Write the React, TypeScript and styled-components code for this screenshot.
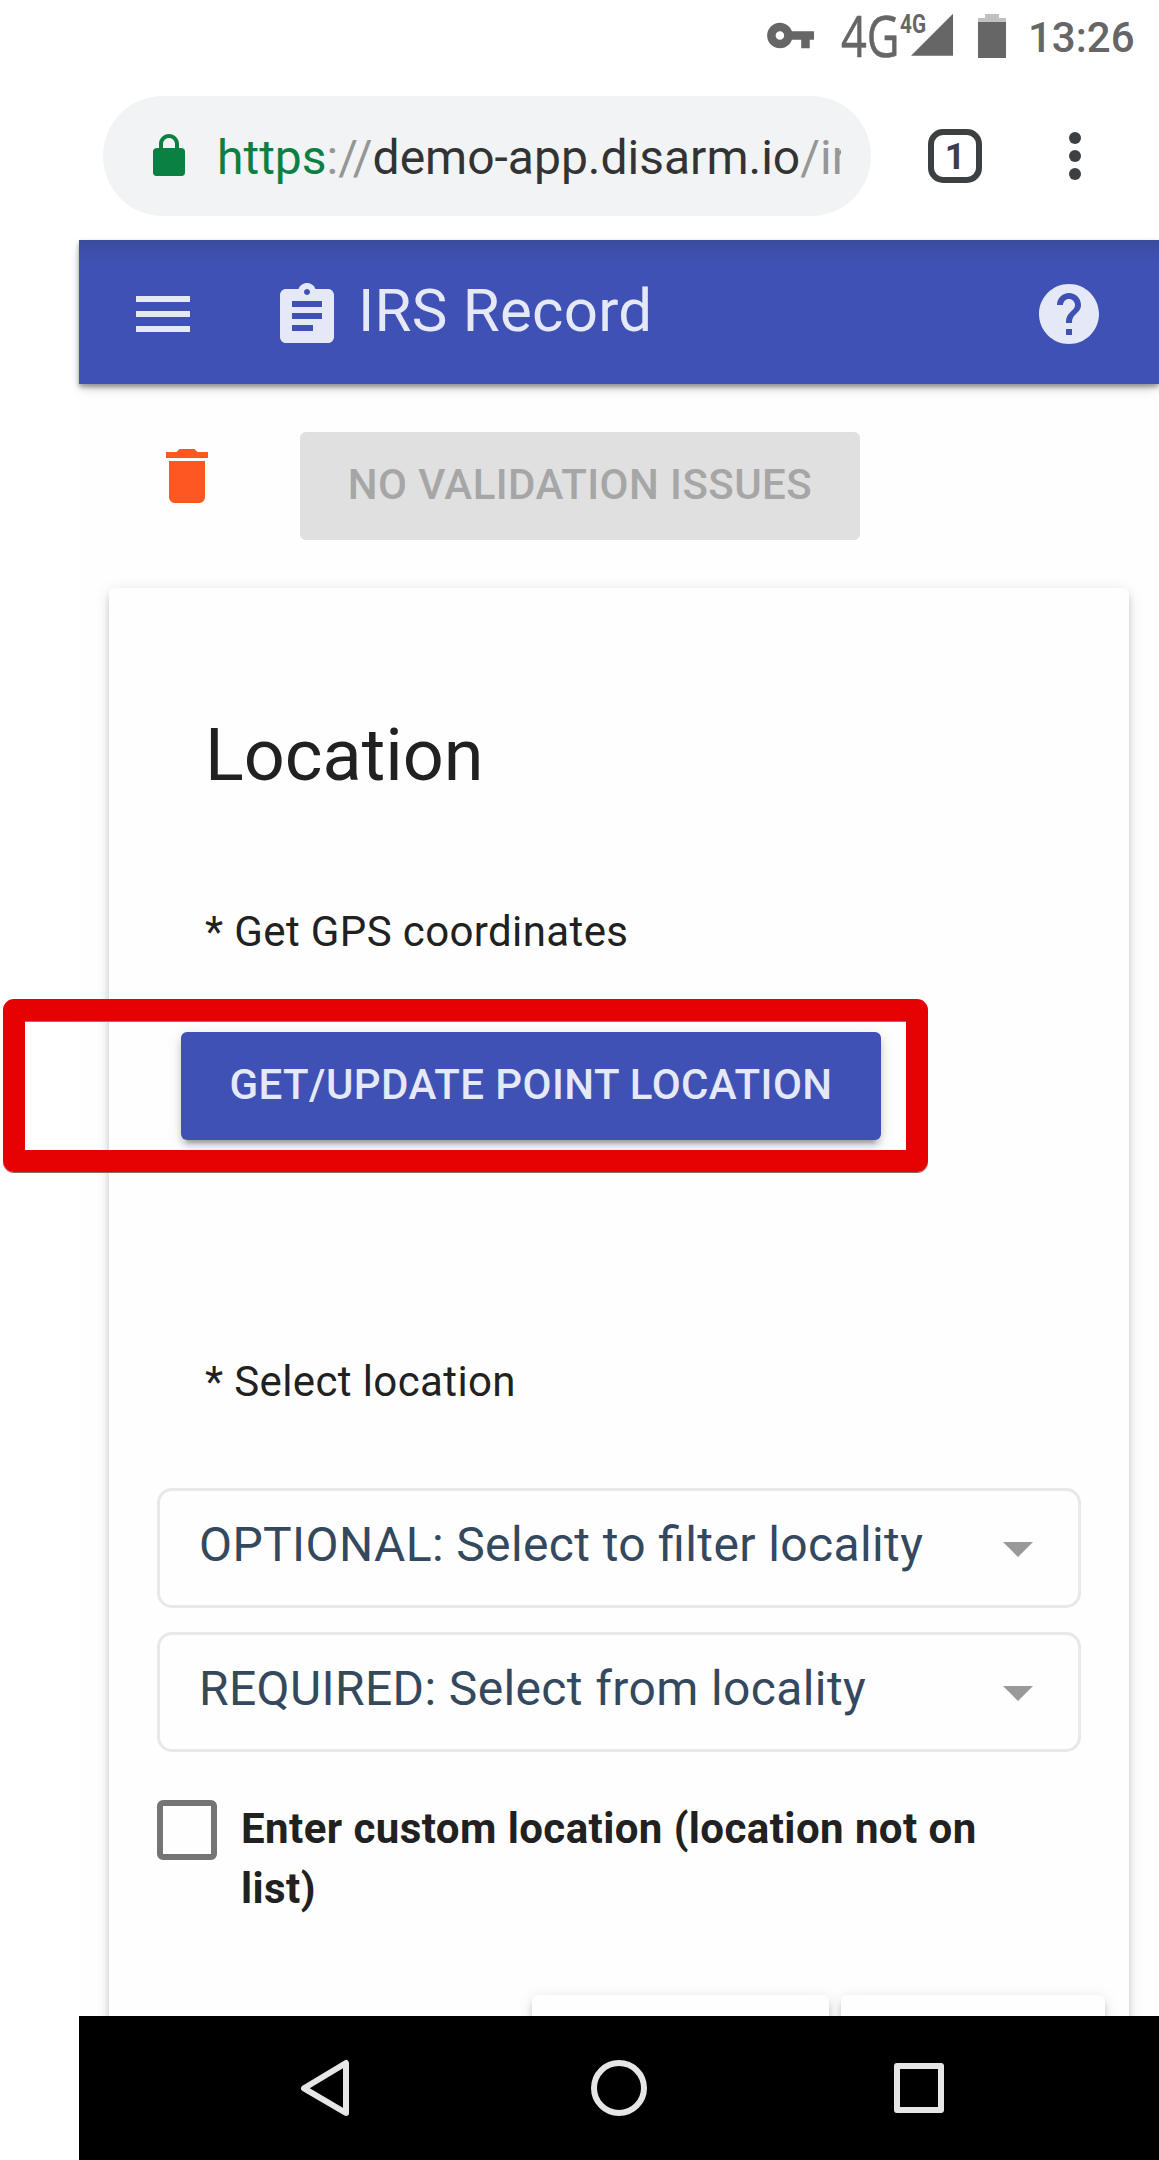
import React from "react";
import styled, { createGlobalStyle } from "styled-components";

const indigo = "#3f51b5";
const onPrimary = "#e5e8f6";

const GlobalStyle = createGlobalStyle`
  body {
    margin: 0;
    background: #fff;
    font-family: Roboto, "Liberation Sans", sans-serif;
    overflow: hidden;
  }
  *, *::before, *::after { box-sizing: border-box; }
  svg { display: block; flex: none; }
`;

const Stage = styled.div`
  position: relative;
  width: 1159px;
  height: 2160px;
  padding-left: 79px;
  overflow: hidden;
`;

const Phone = styled.div`
  display: flex;
  flex-direction: column;
  width: 1080px;
  height: 2160px;
`;

const StatusBar = styled.div`
  display: flex;
  justify-content: flex-end;
  height: 72px;
  padding-right: 24px;
  flex: none;
`;

const StatusIcon = styled.svg<{ $gap: number }>`
  margin-right: ${(p) => p.$gap}px;
  overflow: visible;
`;

const Clock = styled.time`
  width: 107px;
  padding-top: 1px;
  font-size: 42px;
  font-weight: 500;
  line-height: 73px;
  color: #666;
  white-space: nowrap;
`;

const BrowserBar = styled.div`
  display: flex;
  align-items: center;
  height: 168px;
  padding-left: 24px;
  flex: none;
`;

const Omnibox = styled.div`
  display: flex;
  align-items: center;
  width: 768px;
  height: 120px;
  padding: 0 30px 0 42px;
  gap: 24px;
  border-radius: 60px;
  background: #f1f3f4;
`;

const Url = styled.div`
  flex: 1;
  min-width: 0;
  overflow: hidden;
  padding-top: 3px;
  font-size: 48px;
  line-height: 60px;
  color: #333;
  white-space: nowrap;
`;

const UrlScheme = styled.span`
  color: #0b8043;
`;

const UrlFaint = styled.span`
  color: #969696;
`;

const TabSwitcher = styled.button`
  display: flex;
  align-items: center;
  justify-content: center;
  width: 54px;
  height: 54px;
  margin: 0 0 0 57px;
  padding: 2px 0 0;
  border: 6px solid #3c4043;
  border-radius: 15px;
  background: none;
  font: 700 36px/40px Roboto, sans-serif;
  color: #3c4043;
`;

const MoreMenu = styled.div`
  display: flex;
  flex-direction: column;
  gap: 6px;
  margin-left: 87px;
`;

const Dot = styled.span`
  width: 12px;
  height: 12px;
  border-radius: 50%;
  background: #3c4043;
`;

const AppBar = styled.header`
  display: flex;
  align-items: flex-start;
  height: 144px;
  padding: 0 54px 0 48px;
  flex: none;
  z-index: 1;
  color: ${onPrimary};
  background: linear-gradient(rgba(45, 45, 45, 0.18), rgba(45, 45, 45, 0) 22px) ${indigo};
  box-shadow: 0 6px 12px -3px rgba(0, 0, 0, 0.2), 0 3px 5px rgba(0, 0, 0, 0.36);
`;

const BarIcon = styled.svg<{ $top: number; $left?: string }>`
  width: 72px;
  height: 72px;
  margin-top: ${(p) => p.$top}px;
  margin-left: ${(p) => p.$left ?? "0"};
  fill: currentColor;
`;

const BarTitle = styled.h1`
  margin: 35px 0 0 15px;
  font-size: 60px;
  font-weight: 400;
  line-height: 72px;
  letter-spacing: 0.25px;
`;

const Content = styled.main`
  flex: 1;
  min-height: 0;
  overflow: hidden;
  padding: 48px 30px 0;
  background: #fefefe;
`;

const RecordActions = styled.div`
  display: flex;
  align-items: flex-start;
  height: 108px;
  margin: 0 0 48px 42px;
`;

const DeleteIcon = styled.svg`
  width: 72px;
  height: 72px;
  margin: 8px 77px 0 0;
  fill: #ff5722;
`;

const Button = styled.button<{ $width: number }>`
  display: block;
  width: ${(p) => p.$width}px;
  height: 108px;
  padding: 0 0 3px;
  border: 0;
  border-radius: 6px;
  font: 500 42px/60px Roboto, sans-serif;
  letter-spacing: 0.44px;
  white-space: nowrap;
  color: ${onPrimary};
  background: ${indigo};
  box-shadow: 0 9px 3px -6px rgba(0, 0, 0, 0.2), 0 6px 6px rgba(0, 0, 0, 0.14),
    0 3px 15px rgba(0, 0, 0, 0.12);

  &:disabled {
    color: #a6a6a6;
    background: #e0e0e0;
    box-shadow: none;
  }
`;

const Card = styled.section`
  height: 1600px;
  padding-top: 120px;
  border-radius: 6px;
  background: #fefefe;
  box-shadow: 0 9px 3px -6px rgba(0, 0, 0, 0.2), 0 6px 6px rgba(0, 0, 0, 0.14),
    0 3px 15px rgba(0, 0, 0, 0.12);
`;

const CardTitle = styled.h2`
  margin: 0 0 97px 96px;
  font-size: 72px;
  font-weight: 400;
  line-height: 95px;
  color: #212121;
`;

const FieldLabel = styled.div<{ $below: number }>`
  margin: 0 0 ${(p) => p.$below}px 96px;
  font-size: 42px;
  line-height: 63px;
  letter-spacing: 0.38px;
  color: #212121;
`;

const FieldAction = styled.div`
  margin: 0 0 210px 72px;
`;

const SelectList = styled.div`
  display: flex;
  flex-direction: column;
  gap: 24px;
  margin: 0 48px 48px;
`;

const SelectBox = styled.div`
  display: flex;
  align-items: center;
  justify-content: space-between;
  height: 120px;
  padding: 0 45px 7px 39px;
  border: 3px solid #e8e8e8;
  border-radius: 15px;
  font-size: 48px;
  line-height: 60px;
  letter-spacing: 0.38px;
  font-feature-settings: "liga" 1;
  white-space: nowrap;
  color: #35495e;
`;

const Caret = styled.span`
  margin-top: 10px;
  border: 15px solid transparent;
  border-top-color: #999;
  border-bottom-width: 0;
`;

const CheckRow = styled.label`
  display: flex;
  gap: 24px;
  height: 120px;
  margin: 0 48px 75px;
`;

const CheckBox = styled.span`
  flex: none;
  width: 60px;
  height: 60px;
  border: 6px solid #757575;
  border-radius: 6px;
`;

const CheckText = styled.span`
  width: 780px;
  margin-top: -1px;
  font-size: 42px;
  font-weight: 700;
  line-height: 60px;
  letter-spacing: 0.43px;
  color: #212121;
`;

const StepActions = styled.div`
  display: flex;
  justify-content: flex-end;
  gap: 12px;
  padding-right: 24px;
`;

const StepButton = styled(Button)`
  background: #fefefe;
`;

const NavBar = styled.nav`
  display: flex;
  align-items: center;
  justify-content: center;
  gap: 240px;
  height: 144px;
  flex: none;
  z-index: 1;
  background: #000;
`;

const NavIcon = styled.svg`
  width: 60px;
  height: 60px;
  fill: none;
  stroke: #e6e6e6;
  stroke-width: 6;
  stroke-linejoin: round;
`;

/* Marker drawn over the page around the highlighted button. */
const Highlight = styled.div`
  position: absolute;
  left: 3px;
  top: 999px;
  width: 925px;
  height: 173px;
  border: 22px solid #e60202;
  border-radius: 11px;
  box-shadow: 0 1px 0 #8a6a6a, inset 0 1px 0 #8a7a7a;
  pointer-events: none;
`;

const selects = [
  "OPTIONAL: Select to filter locality",
  "REQUIRED: Select from locality",
];

export default function App() {
  return (
    <Stage>
      <GlobalStyle />
      <Phone>
        <StatusBar>
          <StatusIcon $gap={26} width="51" height="72" viewBox="0 0 51 72" fill="#666">
            <path
              transform="translate(0 10) scale(2.13)"
              d="M12.65 10C11.83 7.67 9.61 6 7 6c-3.31 0-6 2.69-6 6s2.69 6 6 6c2.61 0 4.83-1.67 5.65-4H17v4h4v-4h2v-4H12.65zM7 14c-1.1 0-2-.9-2-2s.9-2 2-2 2 .9 2 2-.9 2-2 2z"
            />
          </StatusIcon>
          <StatusIcon $gap={24} width="112" height="72" viewBox="0 0 112 72" fill="#666">
            <text x="-1" y="57" fontFamily="Open Sans, sans-serif" fontSize="56" textLength="58.5" lengthAdjust="spacingAndGlyphs" stroke="#666" strokeWidth="0.6">
              4G
            </text>
            <text x="58" y="32.5" fontFamily="Roboto, sans-serif" fontWeight="700" fontSize="25" textLength="26" lengthAdjust="spacingAndGlyphs">
              4G
            </text>
            <path d="M69 55.7L111 13.7V55.7Z" />
          </StatusIcon>
          <StatusIcon $gap={22} width="28" height="72" viewBox="0 0 28 72">
            <path d="M7 14h14v4h7v4H0v-4h7z" fill="#c1c1c1" />
            <path d="M0 22h28v36H0z" fill="#666" />
          </StatusIcon>
          <Clock>13:26</Clock>
        </StatusBar>

        <BrowserBar>
          <Omnibox>
            <svg width="48" height="48" viewBox="0 0 24 24" fill="#0b8043">
              <path d="M18 8h-1V6c0-2.76-2.24-5-5-5S7 3.24 7 6v2H6c-1.1 0-2 .7-2 1.6v10.8c0 .9.7 1.6 1.6 1.6h12.8c.9 0 1.6-.7 1.6-1.6V9.6C20 8.7 19.3 8 18 8zM9 8V6c0-1.66 1.34-3 3-3s3 1.34 3 3v2z" />
            </svg>
            <Url>
              <UrlScheme>https</UrlScheme>
              <UrlFaint>://</UrlFaint>demo-app.disarm.io<UrlFaint>/ir</UrlFaint>
            </Url>
          </Omnibox>
          <TabSwitcher>1</TabSwitcher>
          <MoreMenu>
            <Dot />
            <Dot />
            <Dot />
          </MoreMenu>
        </BrowserBar>

        <AppBar>
          <BarIcon $top={38} viewBox="0 0 24 24">
            <path d="M3 18h18v-2H3v2zm0-5h18v-2H3v2zm0-7v2h18V6H3z" />
          </BarIcon>
          <BarIcon $top={40} $left="72px" viewBox="0 0 24 24">
            <path d="M19 3h-4.18C14.4 1.84 13.3 1 12 1c-1.3 0-2.4.84-2.82 2H5c-1.1 0-2 .9-2 2v14c0 1.1.9 2 2 2h14c1.1 0 2-.9 2-2V5c0-1.1-.9-2-2-2zm-7 0c.55 0 1 .45 1 1s-.45 1-1 1-1-.45-1-1 .45-1 1-1zm2 14H7v-2h7v2zm3-4H7v-2h10v2zm0-4H7V7h10v2z" />
          </BarIcon>
          <BarTitle>IRS Record</BarTitle>
          <BarIcon $top={38} $left="auto" viewBox="0 0 24 24">
            <path d="M12 2C6.48 2 2 6.48 2 12s4.48 10 10 10 10-4.48 10-10S17.52 2 12 2zm1 17h-2v-2h2v2zm2.07-7.75l-.9.92C13.45 12.9 13 13.5 13 15h-2v-.5c0-1.1.45-2.1 1.17-2.83l1.24-1.26c.37-.36.59-.86.59-1.41 0-1.1-.9-2-2-2s-2 .9-2 2H8c0-2.21 1.79-4 4-4s4 1.79 4 4c0 .88-.36 1.68-.93 2.25z" />
          </BarIcon>
        </AppBar>

        <Content>
          <RecordActions>
            <DeleteIcon viewBox="0 0 24 24">
              <path d="M6 19c0 1.1.9 2 2 2h8c1.1 0 2-.9 2-2V7H6v12zM19 4h-3.5l-1-1h-5l-1 1H5v2h14V4z" />
            </DeleteIcon>
            <Button $width={560} disabled>
              NO VALIDATION ISSUES
            </Button>
          </RecordActions>

          <Card>
            <CardTitle>Location</CardTitle>
            <FieldLabel $below={69}>* Get GPS coordinates</FieldLabel>
            <FieldAction>
              <Button $width={700}>GET/UPDATE POINT LOCATION</Button>
            </FieldAction>
            <FieldLabel $below={75}>* Select location</FieldLabel>
            <SelectList>
              {selects.map((label) => (
                <SelectBox key={label}>
                  {label}
                  <Caret />
                </SelectBox>
              ))}
            </SelectList>
            <CheckRow>
              <CheckBox />
              <CheckText>Enter custom location (location not on list)</CheckText>
            </CheckRow>
            <StepActions>
              <StepButton $width={297} />
              <StepButton $width={264} />
            </StepActions>
          </Card>
        </Content>

        <NavBar>
          <NavIcon viewBox="0 0 60 60">
            <path d="M57 5v50L15 30.3z" />
          </NavIcon>
          <NavIcon viewBox="0 0 60 60">
            <circle cx="30" cy="30" r="25" />
          </NavIcon>
          <NavIcon viewBox="0 0 60 60">
            <rect x="8" y="8" width="44" height="44" />
          </NavIcon>
        </NavBar>
      </Phone>
      <Highlight />
    </Stage>
  );
}
